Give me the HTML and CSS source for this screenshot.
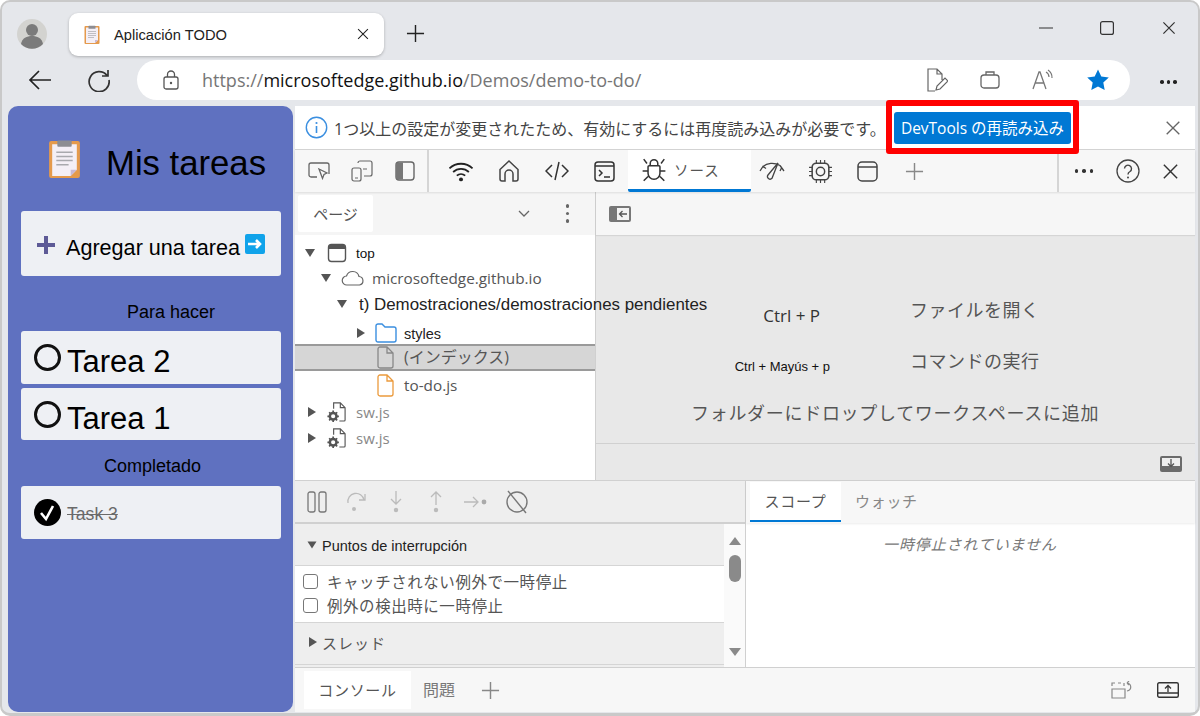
FILE: index.html
```html
<!DOCTYPE html>
<html lang="es">
<head>
<meta charset="utf-8">
<title>Aplicación TODO</title>
<link rel="stylesheet" href="styles.css">
</head>
<body>
<svg class="defs" width="0" height="0">
  <symbol id="clip" viewBox="0 0 32 38">
    <rect x="1" y="2" width="30" height="36" rx="2" fill="#e59a4c"/>
    <path d="M4 5h24v25l-6 6H4z" fill="#f4eff6"/>
    <path d="M28 30h-6v6z" fill="#c9b9d6"/>
    <rect x="9" y="1.5" width="14" height="6" rx="1" fill="#8d8d92"/>
    <path d="M8 13h16M8 17h16M8 21h16M8 25h12" stroke="#a9a9ae" stroke-width="1.4"/>
  </symbol>
  <symbol id="frame" viewBox="0 0 20 20"><rect x="1.5" y="1.5" width="17" height="17" rx="3" fill="none" stroke="currentColor" stroke-width="1.4"/><path d="M2 3.5a2 2 0 0 1 2-2h12a2 2 0 0 1 2 2V6H2z" fill="currentColor"/></symbol>
  <symbol id="swfile" viewBox="0 0 22 22"><path d="M8 8V2h7l5 5v13a1 1 0 0 1-1 1h-5M15 2v5h5" fill="none" stroke="currentColor" stroke-width="1.2"/><circle cx="7.500" cy="16" r="3.500" fill="none" stroke="currentColor" stroke-width="2.600"/><path d="M7.500 10v2.500M7.500 19.500V22M1.500 16H4M11 16h2.500M3.300 11.800l1.700 1.700M10 18.500l1.700 1.700M3.300 20.200 5 18.500M10 13.500l1.700-1.700" stroke="currentColor" stroke-width="1.800"/></symbol>
  <symbol id="doc" viewBox="0 0 18 24"><path d="M2 4a2 2 0 0 1 2-2h7l6 6v13a2 2 0 0 1-2 2H4a2 2 0 0 1-2-2zM11 2v6h6" fill="none" stroke="currentColor" stroke-width="1.300"/></symbol>
  <symbol id="xmark" viewBox="0 0 20 20"><path d="M3 3l14 14M17 3 3 17" stroke="currentColor" stroke-width="1.500" fill="none"/></symbol>
  <symbol id="plus" viewBox="0 0 20 20"><path d="M10 1v18M1 10h18" stroke="currentColor" stroke-width="1.500" fill="none"/></symbol>
</svg>

<div class="window">
  <div class="tabstrip">
    <div class="avatar">
      <svg viewBox="0 0 30 30" width="30" height="30"><circle cx="15" cy="15" r="15" fill="#d3d3d0"/><circle cx="15" cy="11" r="6" fill="#7b7b7b"/><path d="M4 25c1-6 6-8 11-8s10 2 11 8a15 15 0 0 1-22 0z" fill="#7b7b7b"/></svg>
    </div>
    <div class="tab">
      <svg class="tab-ico" width="16" height="19"><use href="#clip"/></svg>
      <span class="tab-title">Aplicación TODO</span>
      <svg class="tab-x" width="14" height="14"><use href="#xmark"/></svg>
    </div>
    <svg class="newtab" width="19" height="19"><use href="#plus"/></svg>
    <div class="winctl">
      <svg width="14" height="14" viewBox="0 0 14 14"><path d="M0 7h14" stroke="#333" stroke-width="1.200"/></svg>
      <svg width="14" height="14" viewBox="0 0 14 14"><rect x=".6" y=".6" width="12.800" height="12.800" rx="2" fill="none" stroke="#333" stroke-width="1.200"/></svg>
      <svg width="16" height="16"><use href="#xmark"/></svg>
    </div>
  </div>

  <div class="navbar">
    <svg class="nav-ico" width="24" height="24" viewBox="0 0 24 24"><path d="M23 12H2M11 3l-9 9 9 9" fill="none" stroke="#222" stroke-width="1.700"/></svg>
    <svg class="nav-ico" width="24" height="24" viewBox="0 0 24 24"><path d="M20 7.500A10 10 0 1 0 22 12M21 2v6h-6" fill="none" stroke="#333" stroke-width="1.700"/></svg>
    <div class="addr">
      <svg class="lock" width="16" height="20" viewBox="0 0 16 20"><rect x="1" y="7" width="14" height="12" rx="2" fill="none" stroke="#555" stroke-width="1.300"/><path d="M4.500 7V4.500a3.500 3.500 0 0 1 7 0V7" fill="none" stroke="#555" stroke-width="1.300"/><circle cx="8" cy="13" r="1.200" fill="#555"/></svg>
      <span class="url"><span class="dim">https://</span>microsoftedge.github.io<span class="dim">/Demos/demo-to-do/</span></span>
      <div class="addr-icons">
        <svg width="22" height="24" viewBox="0 0 22 24"><path d="M9 23H2V1h9l5 5v6M11 1v5h5M10 22l1-4 8-8 3 3-8 8z" fill="none" stroke="#666" stroke-width="1.200"/></svg>
        <svg width="20" height="20" viewBox="0 0 20 20"><rect x="1" y="5" width="18" height="13" rx="3" fill="none" stroke="#666" stroke-width="1.300"/><path d="M6 5V2h8v3" fill="none" stroke="#666" stroke-width="1.300"/></svg>
        <svg width="22" height="22" viewBox="0 0 22 22"><path d="M1 20 7 3h1l6 17M3.500 14h9" fill="none" stroke="#777" stroke-width="1.300"/><path d="M14 3a6 6 0 0 1 3 5M16 1a9 9 0 0 1 4 8" fill="none" stroke="#777" stroke-width="1.200"/></svg>
        <svg width="24" height="24" viewBox="0 0 24 24"><path d="m12 1.500 3.300 6.900 7.500 1-5.500 5.200 1.400 7.500-6.700-3.600-6.700 3.600 1.400-7.500L1.200 9.400l7.500-1z" fill="#0078d4"/></svg>
      </div>
    </div>
    <div class="dots"><i></i><i></i><i></i></div>
  </div>

  <div class="content">
    <aside class="app">
      <header class="app-head">
        <svg width="33" height="39"><use href="#clip"/></svg>
        <h1>Mis tareas</h1>
      </header>
      <div class="card add">
        <svg width="20" height="20" viewBox="0 0 20 20"><path d="M10 1v18M1 10h18" stroke="#5d5a96" stroke-width="4"/></svg>
        <span>Agregar una tarea</span>
        <svg class="arrow" width="20" height="20" viewBox="0 0 20 20"><rect width="20" height="20" rx="2" fill="#10a3ea"/><path d="M3 10h12M11 6l4 4-4 4" stroke="#fff" stroke-width="2.600" fill="none"/></svg>
      </div>
      <h2 class="sec sec-todo">Para hacer</h2>
      <div class="card task"><span class="circle"></span><span class="name">Tarea 2</span></div>
      <div class="card task t2"><span class="circle"></span><span class="name">Tarea 1</span></div>
      <h2 class="sec sec-done">Completado</h2>
      <div class="card task done">
        <svg class="chk" width="27" height="27" viewBox="0 0 27 27"><circle cx="13.500" cy="13.500" r="13.500" fill="#000"/><path d="M7 14l5 6 7-13" fill="none" stroke="#fff" stroke-width="2.600"/></svg>
        <span class="name-done">Task 3</span>
      </div>
    </aside>

    <main class="devtools">
      <div class="infobar">
        <svg class="info-ico" width="23" height="23" viewBox="0 0 23 23"><circle cx="11.500" cy="11.500" r="10.200" fill="none" stroke="#3b8fe0" stroke-width="1.400"/><path d="M11.500 10v7" stroke="#3b8fe0" stroke-width="1.600"/><circle cx="11.500" cy="7" r="1.100" fill="#3b8fe0"/></svg>
        <span class="info-text">1つ以上の設定が変更されたため、有効にするには再度読み込みが必要です。</span>
        <button class="reload">DevTools の再読み込み</button>
        <svg class="info-x" width="18" height="18"><use href="#xmark"/></svg>
      </div>

      <div class="toolbar">
        <div class="tb"><svg width="24" height="22" viewBox="0 0 24 22"><path d="M10 17H4a2 2 0 0 1-2-2V5a2 2 0 0 1 2-2h16a2 2 0 0 1 2 2v9" fill="none" stroke="#666" stroke-width="1.300"/><path d="m12 9 8 4-3 1.500-1.500 4z" fill="none" stroke="#666" stroke-width="1.300"/></svg></div>
        <div class="tb"><svg width="24" height="24" viewBox="0 0 24 24"><path d="M8 4a2 2 0 0 1 2-2h10a2 2 0 0 1 2 2v11a2 2 0 0 1-2 2h-6M13 10h4" fill="none" stroke="#666" stroke-width="1.200"/><rect x="2" y="9" width="9" height="13" rx="2" fill="#f7f7f7" stroke="#666" stroke-width="1.200"/><path d="M5 19h3" stroke="#666"/></svg></div>
        <div class="tb"><svg width="20" height="20" viewBox="0 0 20 20"><rect x="1" y="1" width="18" height="18" rx="3" fill="none" stroke="#666" stroke-width="1.400"/><path d="M3 1.500h5v17H3a2 2 0 0 1-2-2v-13a2 2 0 0 1 2-2z" fill="#777"/></svg></div>
        <div class="tsep tsep-a"></div>
        <div class="tb tb-w"><svg width="26" height="21" viewBox="0 0 24 20"><path d="M1 7a16 16 0 0 1 22 0M4.500 10.500a11 11 0 0 1 15 0M8 14a6 6 0 0 1 8 0" fill="none" stroke="#222" stroke-width="1.700"/><circle cx="12" cy="17.500" r="1.900" fill="#222"/></svg></div>
        <div class="tb tb-w"><svg width="22" height="24" viewBox="0 0 22 24"><path d="M2 10.500 11 2l9 8.500V20a2 2 0 0 1-2 2h-3v-7a4 4 0 0 0-8 0v7H4a2 2 0 0 1-2-2z" fill="none" stroke="#444" stroke-width="1.500"/></svg></div>
        <div class="tb tb-w"><svg width="24" height="20" viewBox="0 0 24 20"><path d="M7 4 1 10l6 6M17 4l6 6-6 6M14 1l-4 18" fill="none" stroke="#333" stroke-width="1.500"/></svg></div>
        <div class="tb tb-w tb-con"><svg width="21" height="21" viewBox="0 0 21 21"><rect x="1" y="1" width="19" height="19" rx="3" fill="none" stroke="#333" stroke-width="1.500"/><path d="M1 5h19M5 9l3 3-3 3M10 16h6" fill="none" stroke="#333" stroke-width="1.500"/></svg></div>
        <div class="dt-tab">
          <svg width="26" height="26" viewBox="0 0 23 24"><path d="M7 8h9a1 1 0 0 1 1 1v6a5.500 5.500 0 0 1-11 0V9a1 1 0 0 1 1-1zM8 8V6a3.500 3.500 0 0 1 7 0v2M2 2l3 4M21 2l-3 4M1 13h5M17 13h5M2 22l4-4M21 22l-4-4" fill="none" stroke="#333" stroke-width="1.400"/></svg>
          <span>ソース</span>
        </div>
        <div class="tb tb-perf"><svg width="26" height="18" viewBox="0 0 26 18"><path d="M1 9l3-4.500 3 2M4 4.500C8 1 15 0 21 3.500M21 3.500 25 9M21 9l1.500-3" fill="none" stroke="#444" stroke-width="1.300"/><path d="M19 1 9 13a2.600 2.600 0 0 0 4 3.300z" fill="none" stroke="#444" stroke-width="1.300"/></svg></div>
        <div class="tb tb-wide"><svg width="25" height="25" viewBox="0 0 24 24"><rect x="4" y="4" width="16" height="16" rx="4" fill="none" stroke="#444" stroke-width="1.500"/><circle cx="12" cy="12" r="4" fill="none" stroke="#444" stroke-width="1.400"/><path d="M8 1v3M12 1v3M16 1v3M8 20v3M12 20v3M16 20v3M1 8h3M1 12h3M1 16h3M20 8h3M20 12h3M20 16h3" stroke="#444" stroke-width="1.100"/></svg></div>
        <div class="tb tb-wide"><svg width="21" height="21" viewBox="0 0 21 21"><rect x="1" y="1" width="19" height="19" rx="4" fill="none" stroke="#444" stroke-width="1.500"/><path d="M1 6h19" stroke="#444" stroke-width="1.500"/></svg></div>
        <div class="tb tb-wide"><svg width="19" height="19" class="grey"><use href="#plus"/></svg></div>
        <div class="spacer"></div>
        <div class="tsep"></div>
        <div class="dots dots-tb"><i></i><i></i><i></i></div>
        <div class="tb"><svg width="24" height="24" viewBox="0 0 24 24"><circle cx="12" cy="12" r="11" fill="none" stroke="#444" stroke-width="1.300"/><path d="M8.500 9.500a3.500 3.500 0 1 1 5.500 3c-1.300.8-2 1.500-2 3" fill="none" stroke="#444" stroke-width="1.400"/><circle cx="12" cy="18.500" r="1" fill="#444"/></svg></div>
        <div class="tb"><svg width="19" height="19" class="dark"><use href="#xmark"/></svg></div>
      </div>

      <section class="sources">
        <div class="navigator">
          <div class="nav-head">
            <div class="page-tab">ページ</div>
            <div class="spacer"></div>
            <svg class="chev" width="12" height="8" viewBox="0 0 12 8"><path d="m1 1 5 5 5-5" fill="none" stroke="#666" stroke-width="1.300"/></svg>
            <div class="vdots"><i></i><i></i><i></i></div>
          </div>
          <div class="tree">
            <div class="row r-top"><i class="tri down"></i><svg width="20" height="20" class="dk"><use href="#frame"/></svg><span class="lbl-top">top</span></div>
            <div class="row r-host"><i class="tri down"></i><svg width="24" height="16" viewBox="0 0 24 16"><path d="M6 15a4.500 4.500 0 0 1-.5-9A6.500 6.500 0 0 1 18 6.500a4.300 4.300 0 0 1 .5 8.500z" fill="none" stroke="#666" stroke-width="1.200"/></svg><span class="lbl">microsoftedge.github.io</span></div>
            <div class="row r-dir"><i class="tri down"></i><span class="lbl-dir">t) Demostraciones/demostraciones pendientes</span></div>
            <div class="row r-styles"><i class="tri right"></i><svg width="22" height="20" viewBox="0 0 22 20"><path d="M1 3a2 2 0 0 1 2-2h4l3 3h9a2 2 0 0 1 2 2v11a2 2 0 0 1-2 2H3a2 2 0 0 1-2-2z" fill="none" stroke="#3b8fe0" stroke-width="1.400"/></svg><span class="lbl-top2">styles</span></div>
            <div class="row r-index"><svg width="18" height="24" class="gr"><use href="#doc"/></svg><span class="lbl lbl-idx">(インデックス)</span></div>
            <div class="row r-todo"><svg width="18" height="24" class="or"><use href="#doc"/></svg><span class="lbl">to-do.js</span></div>
            <div class="row r-sw r-sw1"><i class="tri right"></i><svg width="21" height="21" class="dk"><use href="#swfile"/></svg><span class="lbl-sw">sw.js</span></div>
            <div class="row r-sw"><i class="tri right"></i><svg width="21" height="21" class="dk"><use href="#swfile"/></svg><span class="lbl-sw">sw.js</span></div>
          </div>
        </div>
        <div class="editor">
          <div class="ed-head"><svg width="22" height="16" viewBox="0 0 22 16"><rect width="22" height="16" rx="2" fill="#777"/><rect x="8" y="2" width="12" height="12" fill="#f3f3f3"/><path d="M18 8h-7M13.500 5 10.500 8l3 3" fill="none" stroke="#555" stroke-width="1.300"/></svg></div>
          <div class="ed-body">
            <div class="sc sc-1"><span class="key">Ctrl + P</span><span class="act">ファイルを開く</span></div>
            <div class="sc sc-2"><span class="key key-sm">Ctrl + Mayús + p</span><span class="act">コマンドの実行</span></div>
            <div class="drop">フォルダーにドロップしてワークスペースに追加</div>
          </div>
          <div class="ed-foot"><svg width="22" height="16" viewBox="0 0 22 16"><path d="M2 0h18a2 2 0 0 1 2 2v12a2 2 0 0 1-2 2H2a2 2 0 0 1-2-2V2a2 2 0 0 1 2-2z" fill="#6b6b6b"/><rect x="2" y="2" width="18" height="8" fill="#eee"/><path d="M11 3v7M8 7.500l3 3 3-3" fill="none" stroke="#555" stroke-width="1.300"/></svg></div>
        </div>
      </section>

      <section class="debug">
        <div class="dbg-left">
          <div class="dbg-tools">
            <svg width="20" height="22" viewBox="0 0 20 22"><rect x="1" y="1" width="7" height="20" rx="2" fill="none" stroke="#777" stroke-width="1.300"/><rect x="12" y="1" width="7" height="20" rx="2" fill="none" stroke="#777" stroke-width="1.300"/></svg>
            <svg class="st1" width="24" height="20" viewBox="0 0 24 20"><path d="M2 11a8 8 0 0 1 16-3M19 2v6h-6" fill="none" stroke="#bbb" stroke-width="1.300" transform="translate(2 0)"/><circle cx="10" cy="17" r="2" fill="#bbb"/></svg>
            <svg class="st2" width="14" height="22" viewBox="0 0 14 22"><path d="M7 0v13M2 8l5 5 5-5" fill="none" stroke="#bbb" stroke-width="1.300"/><circle cx="7" cy="19" r="2.200" fill="#bbb"/></svg>
            <svg class="st3" width="14" height="22" viewBox="0 0 14 22"><path d="M7 14V1M2 6l5-5 5 5" fill="none" stroke="#bbb" stroke-width="1.300"/><circle cx="7" cy="19" r="2.200" fill="#bbb"/></svg>
            <svg class="st4" width="24" height="14" viewBox="0 0 24 14"><path d="M0 7h14M9 2l5 5-5 5" fill="none" stroke="#bbb" stroke-width="1.300"/><circle cx="20" cy="7" r="2.400" fill="#aaa"/></svg>
            <svg class="st5" width="24" height="24" viewBox="0 0 24 24"><circle cx="12" cy="12" r="10" fill="none" stroke="#777" stroke-width="1.400"/><path d="M3 1l18 22" stroke="#777" stroke-width="1.400"/></svg>
          </div>
          <div class="dbg-split">
            <div class="panes">
              <div class="pane-head ph-bp"><i class="tri down"></i><span class="bp-title">Puntos de interrupción</span></div>
              <div class="pane-list">
                <label class="cb"><span class="box"></span>キャッチされない例外で一時停止</label>
                <label class="cb"><span class="box"></span>例外の検出時に一時停止</label>
              </div>
              <div class="pane-head ph-th"><i class="tri right"></i><span class="th-title">スレッド</span></div>
            </div>
            <div class="scrollbar">
              <i class="up"></i>
              <i class="thumb"></i>
              <span class="spacer"></span>
              <i class="dn"></i>
            </div>
          </div>
        </div>
        <div class="dbg-right">
          <div class="scope-tabs">
            <div class="scope-tab">スコープ</div>
            <div class="watch-tab">ウォッチ</div>
          </div>
          <div class="scope-body">一時停止されていません</div>
        </div>
      </section>

      <footer class="drawer">
        <div class="console-tab">コンソール</div>
        <div class="issues-tab">問題</div>
        <svg class="grey dr-plus" width="19" height="19"><use href="#plus"/></svg>
        <div class="spacer"></div>
        <svg class="dr-1" width="24" height="18" viewBox="0 0 24 18"><path d="M2 8h13v9H2z M2 5V2h3M8 2h3M14 2v3" fill="none" stroke="#888" stroke-width="1.200"/><path d="M17 2c5 1 5 7 0 8M17 2l2-2M17 2l2 2" fill="none" stroke="#888" stroke-width="1.200"/></svg>
        <svg class="dr-2" width="22" height="16" viewBox="0 0 22 16"><rect x=".7" y=".7" width="20.600" height="14.600" rx="1.500" fill="none" stroke="#333" stroke-width="1.400"/><path d="M1 11h20" stroke="#333" stroke-width="1.400"/><path d="M11 10V4M8 6.500 11 3.500l3 3" fill="none" stroke="#333" stroke-width="1.300"/></svg>
      </footer>
    </main>
  </div>
</div>
</body>
</html>
```
FILE: styles.css
```css
* { box-sizing: border-box; }
html, body { margin: 0; padding: 0; height: 716px; overflow: hidden; background: #fff; }
body { font-family: "Open Sans", "Noto Sans CJK JP", sans-serif; color: #333; }
.defs { display: block; height: 0; }
.spacer { flex: 1; }
i { display: block; }

.window {
  width: 1200px; height: 716px; display: flex; flex-direction: column;
  background: #e5e7eb; border: 2px solid #c9c9c9; border-bottom-width: 3px; border-radius: 10px;
  overflow: hidden; padding: 0 3px 1px 4px;
}

.tabstrip { height: 58px; flex: none; display: flex; align-items: center; position: relative; padding-top: 6px; }
.avatar { width: 30px; height: 30px; margin-left: 11px; margin-right: 22px; }
.tab {
  width: 315px; height: 43px; background: #fff; border-radius: 9px; display: flex; align-items: center;
  padding: 0 14px 0 15px; box-shadow: 0 1px 3px rgba(0,0,0,.25);
  font: 14.700px "Liberation Sans", sans-serif; color: #222;
}
.tab-title { margin: 2px 0 0 14px; flex: 1; }
.tab-x { color: #222; }
.newtab { margin-left: 22px; margin-bottom: 2px; color: #222; }
.winctl { margin-left: auto; display: flex; align-items: center; gap: 47px; padding-right: 18px; padding-bottom: 12px; color: #333; }

.navbar { height: 46px; flex: none; display: flex; align-items: flex-start; padding-top: 0; }
.nav-ico { margin-top: 8px; margin-left: 22px; }
.nav-ico + .nav-ico { margin-left: 35px; }
.addr {
  width: 993px; height: 40px; margin-left: 26px; background: #fff; border-radius: 20px; display: flex; align-items: center;
  padding: 0 20px 0 26px;
}
.lock { flex: none; }
.url { margin-left: 23px; font: 18px "Open Sans", sans-serif; color: #111; white-space: nowrap; }
.dim { color: #767676; }
.addr-icons { margin-left: auto; display: flex; align-items: center; gap: 32px; }
.dots { display: flex; gap: 3px; margin: 20px 0 0 30px; }
.dots i { width: 3.500px; height: 3.500px; border-radius: 50%; background: #222; }

.content { flex: 1; display: flex; min-height: 0; padding-left: 2px; }

.app {
  width: 285px; flex: none; background: #5f71c0; border-radius: 10px; padding: 0 12px 0 13px;
  font-family: "Liberation Sans", sans-serif; color: #000;
}
.app-head { height: 105px; display: flex; align-items: center; padding: 0 0 0 27px; }
.app-head svg { margin-bottom: 1px; }
.app-head h1 { margin: 9px 0 0 25px; font-size: 34.700px; font-weight: 400; line-height: 1; }
.card { background: #eef0f4; border-radius: 3px; display: flex; align-items: center; }
.add { height: 65px; padding: 3px 15px 0; font-size: 21.600px; }
.add span { margin-left: 10px; margin-top: 5px; }
.add .arrow { margin-left: 5px; margin-top: -2px; }
.sec { margin: 0; font-size: 18px; font-weight: 400; line-height: 21px; }
.sec-todo { padding: 26px 0 8px 106px; }
.sec-done { padding: 16px 0 9px 83px; }
.task { height: 53px; padding: 0 13px; align-items: flex-start; }
.t2 { margin-top: 4px; height: 52px; }
.circle { width: 27px; height: 27px; border: 3px solid #111; border-radius: 50%; margin-top: 13px; flex: none; }
.name { font-size: 31px; line-height: 36px; margin: 13px 0 0 6px; }
.done { align-items: center; }
.chk { flex: none; }
.name-done { font-size: 17.600px; margin-left: 6px; color: #6a6a6a; text-decoration: line-through; margin-top: 4px; }

.devtools { width: 900px; margin-left: 2px; flex: none; display: flex; flex-direction: column; background: #fff; min-height: 0; }

.infobar { height: 44px; flex: none; display: flex; align-items: center; background: #fff; border-bottom: 1px solid #d3d3d3; padding: 0 13px 0 10px; position: relative; z-index: 3; }
.info-text { margin-left: 6px; font-size: 16px; color: #444; white-space: nowrap; width: 560px; }
.reload {
  width: 177px; height: 32px; background: #0078d4; color: #fff; border: 0; border-radius: 3px; padding: 0;
  font: 15.500px "Open Sans", "Noto Sans CJK JP", sans-serif; position: relative;
}
.reload::after {
  content: ""; position: absolute; left: -8px; right: -8px; top: -12px; bottom: -10px;
  border: 6px solid #f00; border-radius: 3px; pointer-events: none;
}
.info-x { margin-left: auto; color: #666; }

.toolbar { height: 42px; flex: none; display: flex; align-items: center; background: #f7f7f7; padding: 0 3px 0 2px; box-shadow: 0 1px 2px rgba(0,0,0,.1); position: relative; z-index: 2; }
.tb { width: 43px; height: 100%; display: flex; align-items: center; justify-content: center; flex: none; }
.tb-w { width: 48px; }
.tb-con { width: 46px; margin-right: 1px; }
.tb-perf { width: 42px; margin-right: 3.500px; }
.tb-wide { width: 47px; }
.tsep { width: 2px; height: 100%; background: #d5d5d5; flex: none; margin: 0 8px 0 2px; }
.tsep-a { margin-left: 1px; }
.dots-tb { margin: 0 13px 0 8px; gap: 4px; }
.dots-tb i { background: #333; }
.dt-tab { width: 123px; height: 100%; background: #fff; border-bottom: 3px solid #0078d4; display: flex; align-items: center; padding: 0 0 0 13px; font-size: 14.500px; color: #555; flex: none; border-radius: 0 0 2px 2px; }
.dt-tab span { margin-left: 7px; letter-spacing: 1px; }
.grey { color: #888; }
.dark { color: #333; }

.sources { height: 288px; flex: none; display: flex; }
.navigator { width: 301px; flex: none; border-right: 1px solid #d0d0d0; background: #fff; display: flex; flex-direction: column; }
.nav-head { height: 43px; flex: none; background: #f5f5f5; display: flex; align-items: center; padding: 0 28px 0 3px; }
.page-tab { width: 75px; height: 37px; background: #fff; font-size: 15px; color: #555; display: flex; align-items: center; justify-content: center; border-radius: 2px; }
.chev { margin-right: 36px; }
.vdots { display: flex; flex-direction: column; gap: 4px; margin-right: -2px; }
.vdots i { width: 3.500px; height: 3.500px; border-radius: 50%; background: #666; }

.tree { flex: 1; position: relative; z-index: 1; }
.row { display: flex; align-items: center; white-space: nowrap; }
.tri { width: 0; height: 0; flex: none; }
.tri.down { border-left: 5.500px solid transparent; border-right: 5.500px solid transparent; border-top: 8px solid #555; }
.tri.right { border-top: 5.500px solid transparent; border-bottom: 5.500px solid transparent; border-left: 8px solid #555; }
.dk { color: #555; }
.gr { color: #888; }
.or { color: #eb9a3c; }
.lbl { font-size: 15.300px; color: #555; margin-left: 10px; }
.lbl-idx { font-size: 16px; }
.r-top { height: 25px; margin-top: 5px; padding-left: 10px; }
.r-top svg { margin-left: 12px; }
.lbl-top { font: 13.500px "Liberation Sans", sans-serif; color: #111; margin-left: 9px; margin-top: 2px; }
.r-host { height: 26px; padding-left: 26px; }
.r-host svg { margin-left: 10px; }
.r-host .lbl { margin-left: 7px; }
.r-dir { height: 26px; padding-left: 42px; }
.lbl-dir { font: 16.900px "Liberation Sans", sans-serif; color: #222; margin: 2px 0 0 12px; }
.r-styles { height: 27px; padding-left: 62px; padding-top: 5px; }
.r-styles svg { margin-left: 10px; }
.lbl-top2 { font: 14.500px "Liberation Sans", sans-serif; color: #222; margin-left: 7px; margin-top: 2px; }
.r-index { height: 27px; background: #d6d6d6; border-top: 2px solid #9a9a9a; border-bottom: 2px solid #9a9a9a; padding: 0 0 2px 81px; }
.r-index .lbl { margin: 0 0 2px 10px; }
.r-todo { height: 27px; padding-left: 81px; }
.r-sw { height: 27px; padding-left: 13px; }
.r-sw1 { height: 26px; padding-top: 1px; }
.r-sw svg { margin-left: 10px; }
.lbl-sw { font-size: 15px; color: #888; margin-left: 9px; }

.editor { flex: 1; display: flex; flex-direction: column; background: #e8e8e8; }
.ed-head { height: 43px; flex: none; background: #f6f6f6; display: flex; align-items: center; padding-left: 13px; box-shadow: 0 1px 1px rgba(0,0,0,.08); }
.ed-body { flex: 1; position: relative; }
.sc { display: flex; align-items: flex-start; position: absolute; left: 0; right: 0; }
.sc-1 { top: 63px; }
.sc-2 { top: 114px; }
.key { width: 315px; text-align: right; padding-right: 91px; font-size: 17px; line-height: 24px; color: #333; margin-top: 6px; }
.key-sm { font: 13px/24px "Liberation Sans", sans-serif; color: #111; padding-right: 81px; margin-top: 6px; }
.sc .act { font-size: 18px; line-height: 24px; color: #555; letter-spacing: .5px; margin-left: -1px; }
.drop { position: absolute; top: 164px; left: 95px; font-size: 18px; color: #555; letter-spacing: .7px; white-space: nowrap; }
.ed-foot { height: 37px; flex: none; border-top: 1px solid #d0d0d0; display: flex; justify-content: flex-end; align-items: center; padding-right: 13px; padding-top: 4px; }

.debug { height: 187px; flex: none; display: flex; border-top: 1px solid #d0d0d0; }
.dbg-left { width: 451px; flex: none; display: flex; flex-direction: column; border-right: 1px solid #d0d0d0; min-height: 0; }
.dbg-tools { height: 43px; flex: none; background: #eee; border-bottom: 2px solid #d0d0d0; display: flex; align-items: center; padding-left: 12px; }
.st1 { margin-left: 17px; }
.st2 { margin-left: 21px; }
.st3 { margin-left: 26px; }
.st4 { margin-left: 21px; }
.st5 { margin-left: 17px; }
.dbg-split { flex: 1; display: flex; min-height: 0; }
.panes { flex: 1; background: #eee; display: flex; flex-direction: column; }
.pane-head { display: flex; align-items: center; padding-left: 12px; background: #eee; }
.ph-bp { height: 42px; border-bottom: 1px solid #d5d5d5; }
.ph-bp .tri { transform: scale(.9); margin-top: 1px; }
.bp-title { font: 14.500px "Liberation Sans", sans-serif; color: #222; margin: 3px 0 0 5px; }
.pane-list { height: 57px; background: #fff; padding: 3px 0 0 8px; border-bottom: 1px solid #d5d5d5; }
.cb { display: flex; align-items: center; height: 24.500px; font-size: 15.500px; color: #555; letter-spacing: .55px; }
.box { width: 15px; height: 15px; border: 1.300px solid #777; border-radius: 3px; margin-right: 9px; flex: none; }
.ph-th { height: 42px; border-bottom: 1px solid #d5d5d5; padding: 0 0 3px 14px; }
.th-title { font-size: 15px; color: #555; margin-left: 5px; letter-spacing: 1px; }
.scrollbar { width: 21px; flex: none; background: #fafafa; display: flex; flex-direction: column; align-items: center; padding: 13px 0 11px; }
.up { width: 0; height: 0; border-left: 6.500px solid transparent; border-right: 6.500px solid transparent; border-bottom: 8px solid #8a8a8a; }
.dn { width: 0; height: 0; border-left: 6.500px solid transparent; border-right: 6.500px solid transparent; border-top: 8px solid #8a8a8a; }
.thumb { width: 12px; height: 27px; background: #8a8a8a; border-radius: 6px; margin-top: 10px; }

.dbg-right { flex: 1; display: flex; flex-direction: column; background: #fff; }
.scope-tabs { height: 42px; flex: none; background: #f7f7f7; display: flex; padding-left: 4px; box-shadow: 0 1px 2px rgba(0,0,0,.08); }
.scope-tab { width: 91px; background: #fff; border-bottom: 2px solid #0078d4; display: flex; align-items: center; justify-content: center; padding-bottom: 1px; font-size: 15px; color: #555; letter-spacing: .7px; margin-bottom: 1px; margin-top: 1px; }
.watch-tab { margin-left: 14px; display: flex; align-items: center; padding-bottom: 3px; font-size: 15px; color: #888; letter-spacing: .7px; }
.scope-body { padding-top: 10px; padding-left: 137px; font-size: 15px; font-style: italic; color: #777; letter-spacing: .9px; }

.drawer { flex: 1; min-height: 0; background: #f7f7f7; border-top: 1px solid #d0d0d0; display: flex; align-items: center; padding: 0 16px 0 9px; }
.console-tab { width: 107px; height: 38px; background: #fff; display: flex; align-items: center; justify-content: center; font-size: 15px; color: #555; letter-spacing: .7px; padding-bottom: 2px; }
.issues-tab { margin-left: 12px; font-size: 16px; color: #777; padding-bottom: 2px; }
.dr-plus { margin-left: 26px; }
.dr-2 { margin-left: 23px; }
```
